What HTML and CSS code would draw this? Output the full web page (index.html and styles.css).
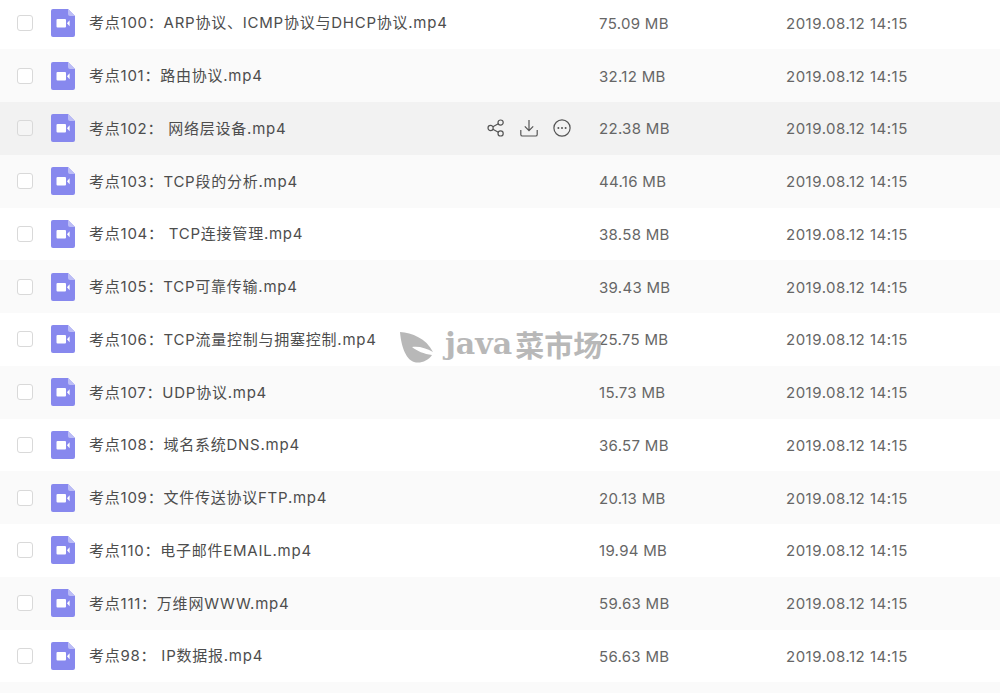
FILE: index.html
```html
<!DOCTYPE html>
<html lang="zh">
<head>
<meta charset="utf-8">
<title>文件列表</title>
<link rel="stylesheet" href="styles.css">
</head>
<body>
<svg class="defs" width="0" height="0" aria-hidden="true">
  <symbol id="video" viewBox="0 0 24 28">
    <path d="M2 0H17L24 7V26a2 2 0 0 1-2 2H2a2 2 0 0 1-2-2V2a2 2 0 0 1 2-2z" fill="#8788ee"/>
    <path d="M17 0L24 7H19a2 2 0 0 1-2-2z" fill="#bcbdf6"/>
    <rect x="5.5" y="10" width="9.5" height="8.5" rx="1" fill="#fff"/>
    <path d="M16 14.2L18.6 11.3V17.2z" fill="#fff"/>
  </symbol>
</svg>
<main class="list">
  <div class="row"><span class="check"></span><svg class="file"><use href="#video"/></svg><span class="name">考点100：ARP协议、ICMP协议与DHCP协议.mp4</span><span class="size">75.09 MB</span><span class="date">2019.08.12 14:15</span></div>
  <div class="row"><span class="check"></span><svg class="file"><use href="#video"/></svg><span class="name">考点101：路由协议.mp4</span><span class="size">32.12 MB</span><span class="date">2019.08.12 14:15</span></div>
  <div class="row hover"><span class="check"></span><svg class="file"><use href="#video"/></svg><span class="name">考点102： 网络层设备.mp4</span>
    <span class="actions">
      <svg class="act" viewBox="0 0 18 18"><circle cx="13.6" cy="3.6" r="2.6"/><circle cx="3.6" cy="9" r="2.6"/><circle cx="13.6" cy="14.4" r="2.6"/><path d="M5.9 7.8L11.3 4.8M5.9 10.2L11.3 13.2"/></svg>
      <svg class="act" viewBox="0 0 18 18"><path d="M9 1V11.5M4.8 7.4L9 11.6L13.2 7.4M.8 11V15.4a1.6 1.6 0 0 0 1.6 1.6H15.6a1.6 1.6 0 0 0 1.6-1.6V11"/></svg>
      <svg class="act" viewBox="0 0 18 18"><circle cx="9" cy="9" r="8.1"/><circle class="dot" cx="5.4" cy="9" r="1"/><circle class="dot" cx="9" cy="9" r="1"/><circle class="dot" cx="12.6" cy="9" r="1"/></svg>
    </span>
    <span class="size">22.38 MB</span><span class="date">2019.08.12 14:15</span></div>
  <div class="row"><span class="check"></span><svg class="file"><use href="#video"/></svg><span class="name">考点103：TCP段的分析.mp4</span><span class="size">44.16 MB</span><span class="date">2019.08.12 14:15</span></div>
  <div class="row"><span class="check"></span><svg class="file"><use href="#video"/></svg><span class="name">考点104： TCP连接管理.mp4</span><span class="size">38.58 MB</span><span class="date">2019.08.12 14:15</span></div>
  <div class="row"><span class="check"></span><svg class="file"><use href="#video"/></svg><span class="name">考点105：TCP可靠传输.mp4</span><span class="size">39.43 MB</span><span class="date">2019.08.12 14:15</span></div>
  <div class="row"><span class="check"></span><svg class="file"><use href="#video"/></svg><span class="name">考点106：TCP流量控制与拥塞控制.mp4</span><span class="size">25.75 MB</span><span class="date">2019.08.12 14:15</span></div>
  <div class="row"><span class="check"></span><svg class="file"><use href="#video"/></svg><span class="name">考点107：UDP协议.mp4</span><span class="size">15.73 MB</span><span class="date">2019.08.12 14:15</span></div>
  <div class="row"><span class="check"></span><svg class="file"><use href="#video"/></svg><span class="name">考点108：域名系统DNS.mp4</span><span class="size">36.57 MB</span><span class="date">2019.08.12 14:15</span></div>
  <div class="row"><span class="check"></span><svg class="file"><use href="#video"/></svg><span class="name">考点109：文件传送协议FTP.mp4</span><span class="size">20.13 MB</span><span class="date">2019.08.12 14:15</span></div>
  <div class="row"><span class="check"></span><svg class="file"><use href="#video"/></svg><span class="name">考点110：电子邮件EMAIL.mp4</span><span class="size">19.94 MB</span><span class="date">2019.08.12 14:15</span></div>
  <div class="row"><span class="check"></span><svg class="file"><use href="#video"/></svg><span class="name">考点111：万维网WWW.mp4</span><span class="size">59.63 MB</span><span class="date">2019.08.12 14:15</span></div>
  <div class="row"><span class="check"></span><svg class="file"><use href="#video"/></svg><span class="name">考点98： IP数据报.mp4</span><span class="size">56.63 MB</span><span class="date">2019.08.12 14:15</span></div>
  <div class="row"></div>
</main>
<div class="mark">
  <svg class="leaf" viewBox="0 0 36 40"><path d="M0 8C12 9 26 14 33 28C26 24 19 22 12 23C17 27 24 30 32 31C28 37 20 40 14 38C5 35 1 20 0 8z" fill="#b8b8b8"/></svg>
  <span class="java">java</span><span class="cn">菜市场</span>
</div>
</body>
</html>
```
FILE: styles.css
```css
html, body {
  margin: 0;
  height: 100%;
  overflow: hidden;
  background: #fff;
}
body {
  position: relative;
  font-family: Inter, "Noto Sans CJK SC", "Noto Sans", sans-serif;
  font-size: 15px;
  color: #4d4d4d;
}
.defs {
  position: absolute;
}
.list {
  margin-top: -3.5px;
}
.row {
  display: flex;
  align-items: center;
  height: 52.75px;
  padding-left: 17px;
  box-sizing: border-box;
  background: #fff;
}
.row:nth-child(even) {
  background: #fafafa;
}
.row.hover {
  background: #f2f2f2;
}
.check {
  flex: none;
  width: 16px;
  height: 16px;
  box-sizing: border-box;
  border: 1px solid #d9d9d9;
  border-radius: 3px;
  background: #fff;
}
.hover .check {
  background: #f5f5f5;
}
.file {
  flex: none;
  width: 24px;
  height: 28px;
  margin-left: 18px;
}
.name {
  flex: none;
  width: 510px;
  margin-left: 14px;
  margin-top: -2px;
  white-space: pre;
  letter-spacing: .76px;
}
.hover .name {
  width: 398px;
}
.actions {
  flex: none;
  display: flex;
  gap: 15px;
  width: 112px;
  align-items: center;
}
.act {
  width: 18px;
  height: 18px;
  fill: none;
  stroke: #555;
  stroke-width: 1.2;
}
.act .dot {
  fill: #555;
  stroke: none;
}
.size {
  flex: none;
  width: 187px;
  margin-top: 1px;
  color: #666;
  letter-spacing: .3px;
}
.date {
  flex: none;
  margin-top: 1px;
  color: #666;
  letter-spacing: .5px;
}
.mark {
  position: absolute;
  left: 400px;
  top: 324px;
  display: flex;
  align-items: center;
  color: #b8b8b8;
  height: 40px;
}
.leaf {
  width: 36px;
  height: 40px;
  margin-right: 9px;
}
.java {
  font-family: "DejaVu Serif", serif;
  font-size: 30px;
  font-weight: 700;
  line-height: 1;
  margin-right: 3px;
}
.cn {
  font-family: "Noto Sans CJK SC", sans-serif;
  font-weight: 700;
  font-size: 29px;
  line-height: 1;
}
```
